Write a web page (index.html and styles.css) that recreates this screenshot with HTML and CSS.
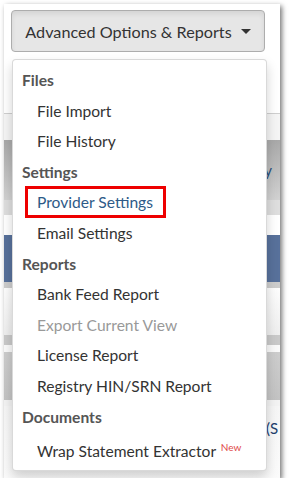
FILE: index.html
```html
<!DOCTYPE html>
<html lang="en">
<head>
    <meta charset="UTF-8">
    <meta name="viewport" content="width=device-width, initial-scale=1.0">
    <title>Advanced Options</title>
    <link rel="stylesheet" href="styles.css">
</head>
<body>
    <div class="shot">
        <div class="toolbar">
            <button class="btn">Advanced Options &amp; Reports <span class="caret"></span></button>
        </div>
        <div class="band b1"></div>
        <div class="band b2"><span class="peek">History</span></div>
        <div class="band b3"></div>
        <div class="band b4"></div>
        <div class="band b5"></div>
        <div class="band b6"></div>
        <div class="band b7"></div>
        <div class="band b8"></div>
        <div class="band b9"></div>
        <div class="band b10"></div>
        <div class="band b11"></div>
        <div class="band b12"><span class="peek-left">(S</span></div>

        <ul class="menu">
            <li class="menu-header">Files</li>
            <li class="menu-item">File Import</li>
            <li class="menu-item">File History</li>
            <li class="menu-header">Settings</li>
            <li class="menu-item active"><span class="marked">Provider Settings</span></li>
            <li class="menu-item">Email Settings</li>
            <li class="menu-header">Reports</li>
            <li class="menu-item">Bank Feed Report</li>
            <li class="menu-item disabled">Export Current View</li>
            <li class="menu-item">License Report</li>
            <li class="menu-item">Registry HIN/SRN Report</li>
            <li class="menu-header">Documents</li>
            <li class="menu-item">Wrap Statement Extractor <sup class="new">New</sup></li>
        </ul>
    </div>
</body>
</html>
```

FILE: styles.css
```css
* { margin: 0; padding: 0; box-sizing: border-box; }
body { font-family: Lato, "Open Sans", sans-serif; background: #fff; }

.shot { position: relative; margin: 4px 0 0 4px; width: 276px; height: 474px; overflow: hidden; background: #fff; box-shadow: 2px 2px 5px rgba(0,0,0,0.55); }

.toolbar { height: 110px; padding: 6px 0 0 7px; background: #fff; border-bottom: 1px solid #cfcfcf; }
.btn { display: flex; align-items: center; justify-content: center; gap: 9px; width: 254px; height: 42px; background: #e6e6e6; border: 1px solid #adadad; border-radius: 4px; box-shadow: inset 0 3px 5px rgba(0,0,0,0.08); font-family: inherit; font-size: 16.2px; color: #333; }
.caret { width: 0; height: 0; border-left: 5px solid transparent; border-right: 5px solid transparent; border-top: 5px solid #333; }

.band { width: 100%; }
.b1 { height: 26px; background: #f5f5f5; }
.b2 { height: 60px; background: linear-gradient(#a9a9a9, #d2d2d2); display: flex; justify-content: flex-end; align-items: center; padding-right: 8px; }
.b3 { height: 15px; background: #dedede; }
.b4 { height: 20px; background: #fff; }
.b5 { height: 47px; background: #58719b; }
.b6 { height: 6px; background: #cccccc; }
.b7 { height: 47px; background: linear-gradient(#fdfdfd, #eeeeee); }
.b8 { height: 10px; background: #c9c9c9; }
.b9 { height: 7px; background: #fafafa; }
.b10 { height: 48px; background: linear-gradient(#cdcdcd, #c3c3c3); }
.b11 { height: 6px; background: #f3f3f3; }
.b12 { height: 72px; background: linear-gradient(#f6f6f6, #fbfbfb); padding: 12px 0 0 262px; white-space: nowrap; }
.peek { font-size: 15px; color: #2a4f7a; }
.peek-left { font-size: 15px; color: #1d3f6e; }

.menu { position: absolute; left: 8px; top: 55px; width: 255px; list-style: none; padding: 5px 0 7px; background: #fff; border: 1px solid rgba(0,0,0,0.15); border-radius: 4px; box-shadow: 0 6px 12px rgba(0,0,0,0.175); }
.menu-header { height: 30.6px; line-height: 30.6px; padding-left: 9px; font-size: 15.6px; font-weight: bold; color: #555; }
.menu-item { height: 30.6px; line-height: 30.6px; padding-left: 24px; font-size: 15.6px; color: #333; white-space: nowrap; }
.menu-item.active { color: #2d5a88; }
.menu-item.disabled { color: #999; }
.marked { display: inline-block; line-height: 26px; margin: 0 0 0 -12px; padding: 0 10px 0 9px; border: 3px solid #ee0000; vertical-align: top; position: relative; top: -1px; }
.new { font-size: 10px; color: #e04848; vertical-align: 6px; margin-left: 1px; }
```
